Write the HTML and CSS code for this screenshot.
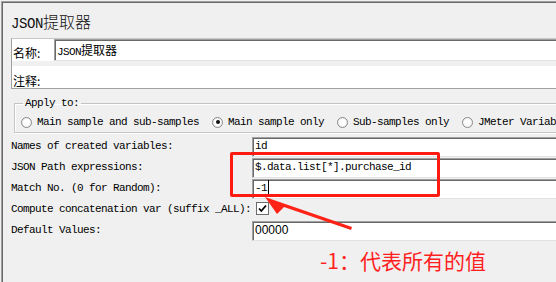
FILE: index.html
```
<!DOCTYPE html>
<html>
<head>
    <title>JSON提取器</title>
    <meta charset="utf-8">
    <link rel="stylesheet" href="styles.css">
</head>
<body>
    <div class="frame">
        <div class="title"><span class="lat">JSON</span>提取器</div>

        <div class="namepanel">
            <div class="namerow">
                <span class="lbl">名称:</span>
                <div class="field inset"><span class="mono">JSON</span>提取器</div>
            </div>
            <div class="gap"></div>
            <div class="namerow comment">
                <span class="lbl">注释:</span>
                <div class="field flat"></div>
            </div>
        </div>

        <fieldset class="apply">
            <legend>Apply to:</legend>
            <div class="radios">
                <span class="radio"></span><span class="rtext">Main sample and sub-samples</span>
                <span class="radio on"></span><span class="rtext">Main sample only</span>
                <span class="radio"></span><span class="rtext">Sub-samples only</span>
                <span class="radio"></span><span class="rtext last">JMeter Variab</span>
            </div>
        </fieldset>

        <div class="form">
            <div class="flabel">Names of created variables:</div>
            <div class="field inset">id</div>
            <div class="flabel">JSON Path expressions:</div>
            <div class="field inset">$.data.list[*].purchase_id</div>
            <div class="flabel">Match No. (0 for Random):</div>
            <div class="field inset">-1<span class="caret"></span></div>
            <div class="flabel">Compute concatenation var (suffix _ALL):</div>
            <div class="checkcell">
                <span class="check">
                    <svg width="11" height="11" viewBox="0 0 11 11"><path d="M2 5.5 L4.3 8 L9 2.5" fill="none" stroke="#000" stroke-width="1.8"/></svg>
                </span>
            </div>
            <div class="flabel">Default Values:</div>
            <div class="field inset sans">00000</div>
        </div>
    </div>

    <!-- annotation drawn over the screenshot -->
    <div class="redbox"></div>
    <svg class="arrow" width="556" height="282" viewBox="0 0 556 282">
        <polygon points="265,197 352,227 351,230 284,207 277,214" fill="#ff2216"/>
    </svg>
    <div class="note">-1：代表所有的值</div>
</body>
</html>
```

FILE: styles.css
```
* {
    box-sizing: border-box;
    margin: 0px;
    padding: 0px;
}

body {
    background-color: #f0f0f0;
    width: 556px;
    height: 282px;
    overflow: hidden;
    position: relative;
    font-family: "Liberation Mono", "Noto Sans CJK SC", monospace;
    font-size: 11px;
    letter-spacing: -0.6px;
    color: #000;
}

.frame {
    margin: 1px 0 0 1px;
    height: 290px;
    width: 555px;
    overflow: hidden;
    border-top: 1px solid #a0a0a0;
    border-left: 1px solid #a0a0a0;
    box-shadow: inset 1px 1px #696969;
    padding: 8px 0 0 9px;
}

.title {
    font-family: "Noto Sans CJK SC", sans-serif;
    font-size: 16px;
    line-height: 22px;
    height: 22px;
    letter-spacing: 0;
    font-weight: 300;
    color: #111;
    margin-bottom: 6px;
}

.title .lat {
    font-family: "Liberation Mono", monospace;
    font-size: 14px;
    letter-spacing: -0.4px;
}

.namepanel {
    border-left: 1px solid #a0a0a0;
    border-top: 1px solid #c8c8c8;
    width: 590px;
}

.namerow {
    display: flex;
    align-items: stretch;
    height: 22px;
    background-color: #fff;
}

.namerow .lbl {
    font-family: "Noto Sans CJK SC", sans-serif;
    font-size: 12px;
    letter-spacing: 0;
    line-height: 22px;
    padding-top: 3px;
    width: 42px;
    padding-left: 1px;
}

.namerow.comment {
    height: 23px;
    border-bottom: 1px solid #a0a0a0;
}

.namerow.comment .lbl {
    width: 37px;
    padding-top: 4px;
}

.gap {
    height: 5px;
}

.namerow .field {
    flex: 1;
    font-family: "Noto Sans CJK SC", sans-serif;
    font-size: 12px;
    line-height: 19px;
    letter-spacing: 0;
}

.namerow .field .mono {
    font-family: "Liberation Mono", monospace;
    font-size: 11px;
    letter-spacing: -0.6px;
}

.field {
    background-color: #fff;
    white-space: nowrap;
    line-height: 17px;
    padding-left: 1px;
}

.field.inset {
    border-top: 1px solid #a0a0a0;
    border-left: 1px solid #a0a0a0;
    border-bottom: 1px solid #e3e3e3;
    box-shadow: inset 1px 1px #696969;
    padding-left: 2px;
}

.field.flat {
    border: none;
}

.field.sans {
    font-family: "Liberation Sans", sans-serif;
    font-size: 12px;
    letter-spacing: 0;
}

.caret {
    display: inline-block;
    width: 1px;
    height: 14px;
    background-color: #000;
    vertical-align: -3px;
    margin-left: 1px;
}

.apply {
    margin: 8px 0 0 3px;
    width: 590px;
    height: 36px;
    border: 1px solid #c4c4c4;
    box-shadow: 1px 1px #fff, inset 1px 1px #fff;
    padding: 0 0 0 6px;
}

.apply legend {
    padding: 0 2px;
    margin-left: 2px;
    line-height: 12px;
}

.radios {
    display: flex;
    align-items: center;
    height: 22px;
    margin-top: 2px;
    white-space: nowrap;
}

.radio {
    width: 11px;
    height: 11px;
    border-radius: 50%;
    border: 1px solid #8a8a8a;
    background: radial-gradient(circle, #fff 40%, #e2e2e2 100%);
    margin-right: 5px;
    position: relative;
    flex-shrink: 0;
}

.radio.on::after {
    content: "";
    position: absolute;
    left: 2.5px;
    top: 2.5px;
    width: 4px;
    height: 4px;
    border-radius: 50%;
    background-color: #111;
}

.rtext {
    margin-right: 13px;
}

.rtext.last {
    margin-right: 0;
}

.form {
    display: grid;
    grid-template-columns: 241px 360px;
    grid-auto-rows: 20px;
    row-gap: 1px;
    margin-top: 4px;
}

.flabel {
    line-height: 19px;
    white-space: nowrap;
    padding-left: 0px;
}

.checkcell {
    padding: 2px 0 0 4px;
}

.check {
    display: block;
    width: 13px;
    height: 13px;
    border: 1px solid #6b6b6b;
    background-color: #fff;
    padding: 0;
}

.check svg {
    display: block;
}

.redbox {
    position: absolute;
    left: 230px;
    top: 152px;
    width: 210px;
    height: 45px;
    border: 3px solid #ff1a12;
    border-radius: 2px;
}

.arrow {
    position: absolute;
    left: 0;
    top: 0;
    pointer-events: none;
}

.note {
    position: absolute;
    left: 320px;
    top: 246px;
    font-family: "Noto Sans CJK SC", sans-serif;
    font-size: 21px;
    line-height: 28px;
    letter-spacing: 0;
    color: #ff1f1f;
    white-space: nowrap;
}
```
